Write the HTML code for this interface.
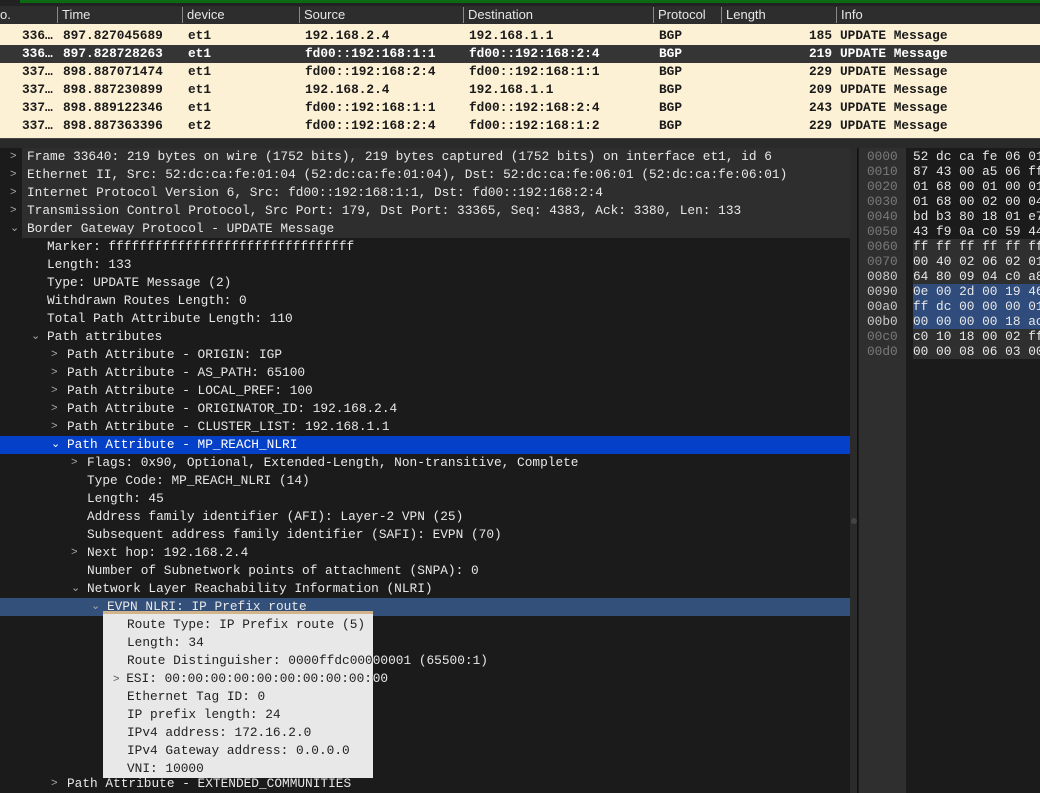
<!DOCTYPE html>
<html><head><meta charset="utf-8"><style>
*{margin:0;padding:0;box-sizing:border-box}
html,body{width:1040px;height:793px;overflow:hidden}
body{background:#1b1b1b;position:relative;font-family:"Liberation Mono",monospace;font-size:12.8px}
.abs{position:absolute}
.hdr{position:absolute;top:6px;left:0;width:1040px;height:18px;background:#2d2d2d;font-family:"Liberation Sans",sans-serif;font-size:13px;color:#e6e6e6}
.hdr span{position:absolute;top:1px;padding-left:4px;border-left:1px solid #888;line-height:16px}
.row{position:absolute;left:0;width:1040px;height:18px;background:#fcf0d5;color:#1a1a1a;font-weight:bold;line-height:18px}
.row span{position:absolute;top:0}
.row.sel{background:#353535;color:#fff}
.t{position:absolute;left:0;width:850px;height:18px;line-height:18px;color:#e8e8e8;white-space:pre}
.t .a{position:absolute;color:#aaa;font-size:11px}
.hx{position:absolute;left:858px;width:182px;height:15px;line-height:15px;white-space:pre;color:#e8e8e8}
.hx .o{position:absolute;left:9px;color:#7a7a7a}
.hx .b{position:absolute;left:55px;width:130px}
.pp div{height:18px;white-space:nowrap}
</style></head><body>
<div class="abs" style="top:0;left:0;width:1040px;height:6px;background:#222"></div>
<div class="abs" style="top:0;left:20px;width:1020px;height:3px;background:#0d6a12"></div>
<div class="hdr">
<span style="left:-4px;border:none">o.</span>
<span style="left:57px">Time</span>
<span style="left:182px">device</span>
<span style="left:299px">Source</span>
<span style="left:463px">Destination</span>
<span style="left:653px">Protocol</span>
<span style="left:721px">Length</span>
<span style="left:836px">Info</span>
</div>
<div class="abs" style="top:24px;left:0;width:1040px;height:114px;background:#fcf0d5"></div>
<div class="row" style="top:27px"><span style="left:22px">336…</span><span style="left:63px">897.827045689</span><span style="left:188px">et1</span><span style="left:305px">192.168.2.4</span><span style="left:469px">192.168.1.1</span><span style="left:659px">BGP</span><span style="left:809px">185</span><span style="left:840px">UPDATE Message</span></div>
<div class="row sel" style="top:45px"><span style="left:22px">336…</span><span style="left:63px">897.828728263</span><span style="left:188px">et1</span><span style="left:305px">fd00::192:168:1:1</span><span style="left:469px">fd00::192:168:2:4</span><span style="left:659px">BGP</span><span style="left:809px">219</span><span style="left:840px">UPDATE Message</span></div>
<div class="row" style="top:63px"><span style="left:22px">337…</span><span style="left:63px">898.887071474</span><span style="left:188px">et1</span><span style="left:305px">fd00::192:168:2:4</span><span style="left:469px">fd00::192:168:1:1</span><span style="left:659px">BGP</span><span style="left:809px">229</span><span style="left:840px">UPDATE Message</span></div>
<div class="row" style="top:81px"><span style="left:22px">337…</span><span style="left:63px">898.887230899</span><span style="left:188px">et1</span><span style="left:305px">192.168.2.4</span><span style="left:469px">192.168.1.1</span><span style="left:659px">BGP</span><span style="left:809px">209</span><span style="left:840px">UPDATE Message</span></div>
<div class="row" style="top:99px"><span style="left:22px">337…</span><span style="left:63px">898.889122346</span><span style="left:188px">et1</span><span style="left:305px">fd00::192:168:1:1</span><span style="left:469px">fd00::192:168:2:4</span><span style="left:659px">BGP</span><span style="left:809px">243</span><span style="left:840px">UPDATE Message</span></div>
<div class="row" style="top:117px"><span style="left:22px">337…</span><span style="left:63px">898.887363396</span><span style="left:188px">et2</span><span style="left:305px">fd00::192:168:2:4</span><span style="left:469px">fd00::192:168:1:2</span><span style="left:659px">BGP</span><span style="left:809px">229</span><span style="left:840px">UPDATE Message</span></div>
<div class="abs" style="top:138px;left:0;width:1040px;height:10px;background:#2a2a2a;border-top:1px solid #444"></div>

<div class="abs" style="top:148px;left:22px;width:828px;height:90px;background:#2e2e2e"></div>
<div class="abs" style="top:436px;left:0;width:850px;height:18px;background:#0540c8"></div>
<div class="abs" style="top:598px;left:0;width:850px;height:18px;background:#33507b"></div>
<div class="abs" style="top:148px;left:850px;width:8px;height:645px;background:#2b2b2b;border-right:1px solid #111"></div>
<div class="abs" style="top:518px;left:851px;width:6px;height:6px;border-radius:3px;background:#444"></div>

<div class="t" style="top:148px"><span class="a" style="left:10px">&gt;</span><span style="position:absolute;left:27px">Frame 33640: 219 bytes on wire (1752 bits), 219 bytes captured (1752 bits) on interface et1, id 6</span></div>
<div class="t" style="top:166px"><span class="a" style="left:10px">&gt;</span><span style="position:absolute;left:27px">Ethernet II, Src: 52:dc:ca:fe:01:04 (52:dc:ca:fe:01:04), Dst: 52:dc:ca:fe:06:01 (52:dc:ca:fe:06:01)</span></div>
<div class="t" style="top:184px"><span class="a" style="left:10px">&gt;</span><span style="position:absolute;left:27px">Internet Protocol Version 6, Src: fd00::192:168:1:1, Dst: fd00::192:168:2:4</span></div>
<div class="t" style="top:202px"><span class="a" style="left:10px">&gt;</span><span style="position:absolute;left:27px">Transmission Control Protocol, Src Port: 179, Dst Port: 33365, Seq: 4383, Ack: 3380, Len: 133</span></div>
<div class="t" style="top:220px"><span class="a" style="left:10px">⌄</span><span style="position:absolute;left:27px">Border Gateway Protocol - UPDATE Message</span></div>
<div class="t" style="top:238px"><span style="position:absolute;left:47px">Marker: ffffffffffffffffffffffffffffffff</span></div>
<div class="t" style="top:256px"><span style="position:absolute;left:47px">Length: 133</span></div>
<div class="t" style="top:274px"><span style="position:absolute;left:47px">Type: UPDATE Message (2)</span></div>
<div class="t" style="top:292px"><span style="position:absolute;left:47px">Withdrawn Routes Length: 0</span></div>
<div class="t" style="top:310px"><span style="position:absolute;left:47px">Total Path Attribute Length: 110</span></div>
<div class="t" style="top:328px"><span class="a" style="left:31px">⌄</span><span style="position:absolute;left:47px">Path attributes</span></div>
<div class="t" style="top:346px"><span class="a" style="left:51px">&gt;</span><span style="position:absolute;left:67px">Path Attribute - ORIGIN: IGP</span></div>
<div class="t" style="top:364px"><span class="a" style="left:51px">&gt;</span><span style="position:absolute;left:67px">Path Attribute - AS_PATH: 65100</span></div>
<div class="t" style="top:382px"><span class="a" style="left:51px">&gt;</span><span style="position:absolute;left:67px">Path Attribute - LOCAL_PREF: 100</span></div>
<div class="t" style="top:400px"><span class="a" style="left:51px">&gt;</span><span style="position:absolute;left:67px">Path Attribute - ORIGINATOR_ID: 192.168.2.4</span></div>
<div class="t" style="top:418px"><span class="a" style="left:51px">&gt;</span><span style="position:absolute;left:67px">Path Attribute - CLUSTER_LIST: 192.168.1.1</span></div>
<div class="t" style="top:436px;color:#fff"><span class="a" style="left:51px;color:#fff">⌄</span><span style="position:absolute;left:67px">Path Attribute - MP_REACH_NLRI</span></div>
<div class="t" style="top:454px"><span class="a" style="left:71px">&gt;</span><span style="position:absolute;left:87px">Flags: 0x90, Optional, Extended-Length, Non-transitive, Complete</span></div>
<div class="t" style="top:472px"><span style="position:absolute;left:87px">Type Code: MP_REACH_NLRI (14)</span></div>
<div class="t" style="top:490px"><span style="position:absolute;left:87px">Length: 45</span></div>
<div class="t" style="top:508px"><span style="position:absolute;left:87px">Address family identifier (AFI): Layer-2 VPN (25)</span></div>
<div class="t" style="top:526px"><span style="position:absolute;left:87px">Subsequent address family identifier (SAFI): EVPN (70)</span></div>
<div class="t" style="top:544px"><span class="a" style="left:71px">&gt;</span><span style="position:absolute;left:87px">Next hop: 192.168.2.4</span></div>
<div class="t" style="top:562px"><span style="position:absolute;left:87px">Number of Subnetwork points of attachment (SNPA): 0</span></div>
<div class="t" style="top:580px"><span class="a" style="left:71px">⌄</span><span style="position:absolute;left:87px">Network Layer Reachability Information (NLRI)</span></div>
<div class="t" style="top:598px"><span class="a" style="left:91px">⌄</span><span style="position:absolute;left:107px">EVPN NLRI: IP Prefix route</span></div>
<div class="t" style="top:652px"><span style="position:absolute;left:127px">Route Distinguisher: 0000ffdc00000001 (65500:1)</span></div>
<div class="t" style="top:670px"><span style="position:absolute;left:127px">ESI: 00:00:00:00:00:00:00:00:00:00</span></div>
<div class="t" style="top:775px"><span class="a" style="left:51px">&gt;</span><span style="position:absolute;left:67px">Path Attribute - EXTENDED_COMMUNITIES</span></div>

<div class="abs pp" style="top:611px;left:103px;width:270px;height:167px;background:#e8e8e8;border-top:3px solid #d2b48c;overflow:hidden;color:#222;line-height:18px">
<div style="padding-left:24px;margin-top:2px">Route Type: IP Prefix route (5)</div>
<div style="padding-left:24px">Length: 34</div>
<div style="padding-left:24px">Route Distinguisher: 0000ffdc00000001 (65500:1)</div>
<div style="padding-left:10px"><span style="color:#555;font-size:11px">&gt;&nbsp;</span>ESI: 00:00:00:00:00:00:00:00:00:00</div>
<div style="padding-left:24px">Ethernet Tag ID: 0</div>
<div style="padding-left:24px">IP prefix length: 24</div>
<div style="padding-left:24px">IPv4 address: 172.16.2.0</div>
<div style="padding-left:24px">IPv4 Gateway address: 0.0.0.0</div>
<div style="padding-left:24px">VNI: 10000</div>
</div>

<div class="abs" style="top:148px;left:859px;width:47px;height:645px;background:#2f2f2f"></div>
<div class="abs" style="top:239px;left:913px;width:127px;height:120px;background:#2f2f2f"></div>
<div class="abs" style="top:284px;left:913px;width:127px;height:45px;background:#2f4c7c"></div>
<div class="hx" style="top:149px"><span class="o">0000</span><span class="b">52 dc ca fe 06 01</span></div>
<div class="hx" style="top:164px"><span class="o">0010</span><span class="b">87 43 00 a5 06 ff</span></div>
<div class="hx" style="top:179px"><span class="o">0020</span><span class="b">01 68 00 01 00 01</span></div>
<div class="hx" style="top:194px"><span class="o">0030</span><span class="b">01 68 00 02 00 04</span></div>
<div class="hx" style="top:209px"><span class="o">0040</span><span class="b">bd b3 80 18 01 e7</span></div>
<div class="hx" style="top:224px"><span class="o">0050</span><span class="b">43 f9 0a c0 59 44</span></div>
<div class="hx" style="top:239px"><span class="o">0060</span><span class="b">ff ff ff ff ff ff</span></div>
<div class="hx" style="top:254px"><span class="o">0070</span><span class="b">00 40 02 06 02 01</span></div>
<div class="hx" style="top:269px"><span class="o" style="color:#ccc">0080</span><span class="b">64 80 09 04 c0 a8</span></div>
<div class="hx" style="top:284px"><span class="o" style="color:#ccc">0090</span><span class="b">0e 00 2d 00 19 46</span></div>
<div class="hx" style="top:299px"><span class="o" style="color:#ccc">00a0</span><span class="b">ff dc 00 00 00 01</span></div>
<div class="hx" style="top:314px"><span class="o" style="color:#ccc">00b0</span><span class="b">00 00 00 00 18 ac</span></div>
<div class="hx" style="top:329px"><span class="o">00c0</span><span class="b">c0 10 18 00 02 ff</span></div>
<div class="hx" style="top:344px"><span class="o">00d0</span><span class="b">00 00 08 06 03 00</span></div>
</body></html>
